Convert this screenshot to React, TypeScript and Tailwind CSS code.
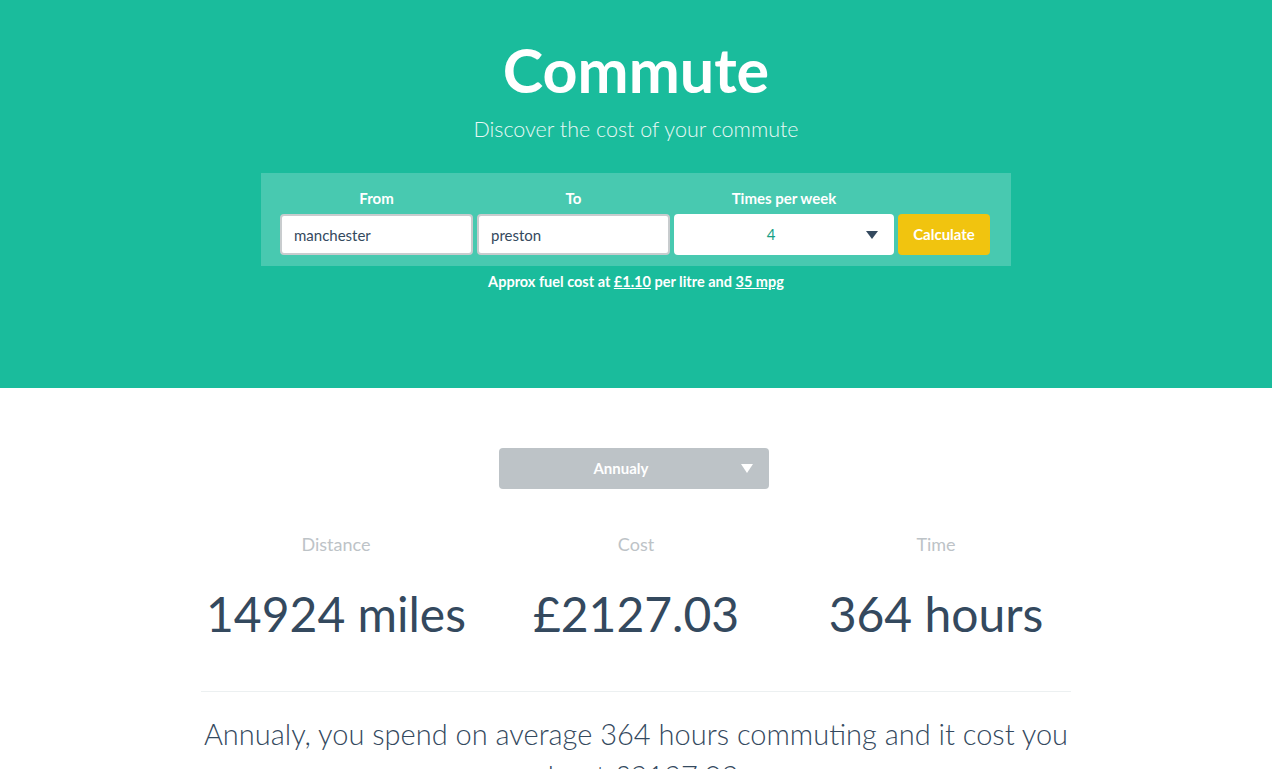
export default function App() {
  return (
    <div className="min-h-screen bg-white font-['Lato','Liberation_Sans',sans-serif] text-[#34495e]">
      <header className="bg-[#1abc9c] h-[388px] flex flex-col items-center pt-[35px]">
        <h1 className="text-white font-bold text-[61px] leading-[70px]">Commute</h1>
        <p className="text-[#e8f8f5] font-light text-[21.5px] leading-[24px] mt-[12px]">
          Discover the cost of your commute
        </p>
        <form className="mt-[32px] w-[750px] h-[93px] bg-[#48c9b0] flex gap-[4px] pl-[19px] pt-[16px]">
          <label className="flex flex-col items-center w-[193px]">
            <span className="text-white font-bold text-[15px] leading-[18px] mb-[7px]">From</span>
            <input
              defaultValue="manchester"
              className="w-full h-[41px] bg-white border-2 border-[#c8ccce] rounded-[4px] px-[12px] text-[15px] text-[#34495e] outline-none"
            />
          </label>
          <label className="flex flex-col items-center w-[193px]">
            <span className="text-white font-bold text-[15px] leading-[18px] mb-[7px]">To</span>
            <input
              defaultValue="preston"
              className="w-full h-[41px] bg-white border-2 border-[#c8ccce] rounded-[4px] px-[12px] text-[15px] text-[#34495e] outline-none"
            />
          </label>
          <label className="flex flex-col items-center w-[220px]">
            <span className="text-white font-bold text-[15px] leading-[18px] mb-[7px]">Times per week</span>
            <div className="relative w-full h-[41px] bg-white rounded-[4px] flex items-center justify-center pr-[26px]">
              <span className="text-[15px] text-[#16a085]">4</span>
              <svg className="absolute right-[16px] top-[17px]" width="12" height="8" viewBox="0 0 12 8">
                <path d="M0 0h12L6 8z" fill="#34495e" />
              </svg>
            </div>
          </label>
          <div className="flex flex-col justify-end pb-[11px]">
            <button
              type="button"
              className="w-[92px] h-[41px] bg-[#f1c40f] rounded-[4px] text-white font-bold text-[15px]"
            >
              Calculate
            </button>
          </div>
        </form>
        <p className="text-white font-bold text-[14.5px] mt-[5px]">
          Approx fuel cost at <span className="underline">£1.10</span> per litre and{" "}
          <span className="underline">35 mpg</span>
        </p>
      </header>

      <main className="w-[900px] mx-auto flex flex-col items-center pt-[60px]">
        <div className="relative w-[270px] h-[41px] bg-[#bdc3c7] rounded-[4px] flex items-center justify-center pr-[26px] -translate-x-[2px]">
          <span className="text-white font-bold text-[15px]">Annualy</span>
          <svg className="absolute right-[16px] top-[16px]" width="12" height="9" viewBox="0 0 12 9">
            <path d="M0 0h12L6 9z" fill="#ffffff" />
          </svg>
        </div>

        <div className="grid grid-cols-3 w-full mt-[43px]">
          {[
            ["Distance", "14924 miles"],
            ["Cost", "£2127.03"],
            ["Time", "364 hours"],
          ].map(([label, value]) => (
            <div key={label} className="flex flex-col items-center">
              <span className="text-[#bdc3c7] text-[18px] leading-[24px]">{label}</span>
              <span className="text-[48px] leading-[58px] mt-[29px]">{value}</span>
            </div>
          ))}
        </div>

        <hr className="w-[870px] border-t border-[#ecf0f1] mt-[48px]" />

        <p className="w-[880px] text-center font-light text-[29px] leading-[42px] mt-[21px]">
          Annualy, you spend on average 364 hours commuting and it cost you about £2127.03
        </p>
      </main>
    </div>
  );
}
